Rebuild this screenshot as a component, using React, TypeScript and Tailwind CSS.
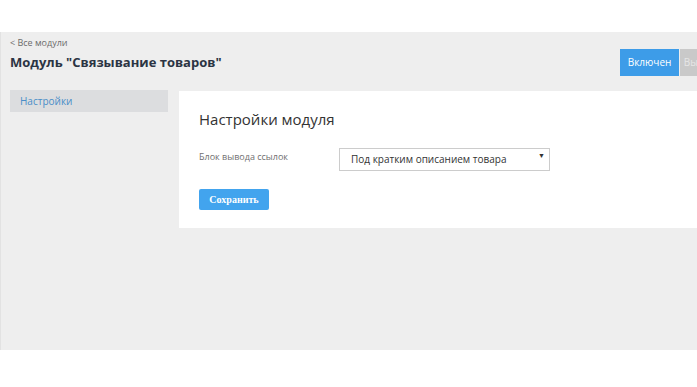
import React, { useState } from 'react';

const App = () => {
  const [placement, setPlacement] = useState('short');

  return (
    <div className="h-[387px] w-[697px] overflow-hidden bg-white font-['Open_Sans',sans-serif]">
      <div className="h-[32px]" />

      <div className="h-[318px] border-l border-[#e2e2e2] bg-[#eeeeee]">
        {/* Header */}
        <div className="flex h-[58px] items-start justify-between">
          <div className="pl-[9px] pt-[4px]">
            <a className="block text-[9px] leading-[14px] text-[#6b6b6b]">&lt; Все модули</a>
            <h1 className="mt-[2px] text-[13px] font-bold leading-[20px] text-[#2b3443]">
              Модуль "Связывание товаров"
            </h1>
          </div>
          <div className="-mr-[42px] mt-[17px] flex shrink-0">
            <button className="h-[27px] w-[59px] bg-[#3d9ce8] text-[10px] text-white">
              Включен
            </button>
            <button className="ml-[1px] h-[27px] w-[59px] bg-[#c9c9c9] text-[10px] text-[#e6e6e6]">
              Выключен
            </button>
          </div>
        </div>

        {/* Body */}
        <div className="flex">
          <div className="w-[168px] pl-[9px]">
            <div className="h-[22px] w-[158px] bg-[#dcdddf] pl-[10px] text-[10px] leading-[22px] text-[#4a8ec8]">
              Настройки
            </div>
          </div>
          <div className="ml-[10px] mt-[1px] flex-1 bg-white px-[20px] pb-[18px] pt-[16px]">
            <h2 className="text-[15px] leading-[24px] text-[#333333]">Настройки модуля</h2>
            <div className="mt-[14px] flex items-center">
              <label className="w-[140px] text-[9px] text-[#6f6f6f]">Блок вывода ссылок</label>
              <div className="relative h-[23px] w-[211px]">
                <select
                  value={placement}
                  onChange={(e) => setPlacement(e.target.value)}
                  className="h-full w-full appearance-none border border-[#cccccc] bg-white pl-[11px] text-[10px] text-[#333333] outline-none"
                >
                  <option value="short">Под кратким описанием товара</option>
                  <option value="full">Под полным описанием товара</option>
                </select>
                <span className="pointer-events-none absolute right-[5px] top-[6px] text-[7px] leading-[10px] text-[#333333]">▼</span>
              </div>
            </div>
            <button className="mt-[21px] h-[21px] w-[70px] rounded-[2px] bg-[#42a4ee] font-['Liberation_Serif',serif] text-[10px] font-bold text-white">
              Сохранить
            </button>
          </div>
        </div>
      </div>
    </div>
  );
};

export default App;
